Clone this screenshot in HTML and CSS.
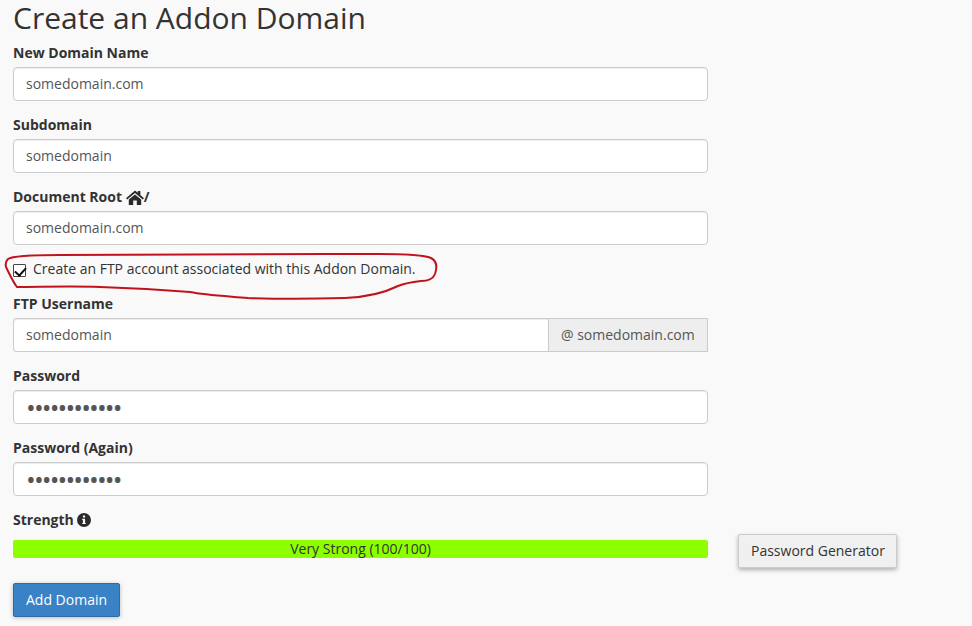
FILE: index.html
```html
<!DOCTYPE html>
<html lang="en">
<head>
<meta charset="utf-8">
<title>Create an Addon Domain</title>
<link rel="stylesheet" href="styles.css">
</head>
<body>
<main class="page">
  <h1 class="title">Create an Addon Domain</h1>
  <form class="form">
    <div class="group">
      <label class="label">New Domain Name</label>
      <input class="input" type="text" value="somedomain.com">
    </div>
    <div class="group">
      <label class="label">Subdomain</label>
      <input class="input" type="text" value="somedomain">
    </div>
    <div class="group">
      <label class="label">Document Root
        <svg class="home" viewBox="0 0 18 15" width="18" height="15"><path fill="#2b2b2b" d="M9 0.4 L11.8 2.8 V1 H14.4 V5 L18 8.2 L16.8 9.6 L9 3 L1.2 9.6 L0 8.2 Z M9 4.4 L15.2 9.6 V15 H10.8 V10.6 H7.2 V15 H2.8 V9.6 Z"/></svg>/</label>
      <input class="input" type="text" value="somedomain.com">
    </div>
    <label class="check-row">
      <input class="check" type="checkbox" checked>
      <span>Create an FTP account associated with this Addon Domain.</span>
    </label>
    <div class="group">
      <label class="label">FTP Username</label>
      <div class="input-group">
        <input class="input input-joined" type="text" value="somedomain">
        <span class="addon">@ somedomain.com</span>
      </div>
    </div>
    <div class="group">
      <label class="label">Password</label>
      <input class="input input-secret" type="password" value="abcdefghijkl">
    </div>
    <div class="group">
      <label class="label">Password (Again)</label>
      <input class="input input-secret" type="password" value="abcdefghijkl">
    </div>
    <div class="strength">
      <div class="strength-main">
        <div class="label">Strength
          <svg class="info" viewBox="0 0 14 14" width="14" height="14"><path fill="#2b2b2b" fill-rule="evenodd" d="M7 0 A7 7 0 1 1 7 14 A7 7 0 1 1 7 0 Z M5.9 2.5 V4.6 H8.1 V2.5 Z M5.2 5.8 V7 H5.9 V9.9 H5.2 V11.1 H8.8 V9.9 H8.1 V5.8 Z"/></svg>
        </div>
        <div class="meter">Very Strong (100/100)</div>
      </div>
      <button class="btn btn-default" type="button">Password Generator</button>
    </div>
    <button class="btn btn-primary" type="button">Add Domain</button>
  </form>
  <svg class="scribble" viewBox="0 0 972 626" width="972" height="626"><path fill="none" stroke="#c0141c" stroke-width="2" d="M8 259 C12 256 30 255 60 255 C130 254 260 254 380 254 C400 254 424 255 431 258 C437 261 437 268 435 274 C433 279 428 281 421 281 C412 282 405 283 398 286 C388 291 370 297 345 298 C310 299 275 299 248 298 C225 296 205 295 190 292 C165 290 130 288 100 287 C70 286 40 287 17 287 C13 282 9 273 6 267 C5 263 6 261 8 259 Z"/></svg>
</main>
</body>
</html>
```

FILE: styles.css
```css
* { box-sizing: border-box; }
html, body { margin: 0; padding: 0; }
body {
  background: #f9f9f9;
  color: #333;
  font-family: "Open Sans", "Liberation Sans", sans-serif;
  font-size: 14px;
  line-height: 20px;
  height: 626px;
  overflow: hidden;
}
.page { position: relative; padding: 1px 0 0 13px; }
.title {
  margin: 0 0 8px;
  font-size: 30px;
  font-weight: 400;
  line-height: 34px;
  height: 34px;
  color: #333;
}
.form { width: 884px; }
.group { width: 695px; margin-bottom: 14px; }
.label {
  display: block;
  margin-bottom: 4px;
  font-weight: 700;
  font-size: 14px;
  line-height: 20px;
}
.home { vertical-align: -3px; }
.info { vertical-align: -2px; }
.input {
  display: block;
  width: 100%;
  height: 34px;
  padding: 5px 12px 7px;
  border: 1px solid #ccc;
  border-radius: 4px;
  background: #fff;
  color: #555;
  font-family: inherit;
  font-size: 14px;
  line-height: 20px;
  box-shadow: inset 0 1px 1px rgba(0,0,0,.075);
}
.input-secret {
  padding: 0 12px 0;
  font-size: 26px;
  letter-spacing: -1.9px;
  line-height: 32px;
}
.input-group { display: flex; }
.input-joined { flex: 1; min-width: 0; border-radius: 4px 0 0 4px; border-right: 0; }
.addon {
  width: 160px;
  height: 34px;
  padding: 6px 12px;
  border: 1px solid #ccc;
  background: #eee;
  color: #555;
  white-space: nowrap;
}
.check-row {
  display: flex;
  align-items: center;
  height: 20px;
  margin-bottom: 15px;
}
.check {
  appearance: none;
  position: relative;
  flex: none;
  width: 13px;
  height: 13px;
  margin: 2px 7px 0 0;
  border: 1px solid #444;
  border-radius: 1px;
  background: #fff;
}
.check::after {
  content: "";
  position: absolute;
  left: 3px;
  top: 0;
  width: 5px;
  height: 9px;
  border: solid #111;
  border-width: 0 2px 2px 0;
  transform: rotate(42deg);
}
.strength { display: flex; align-items: flex-end; gap: 30px; margin-bottom: 25px; }
.strength-main { width: 695px; }
.strength-main .label { margin-bottom: 10px; }
.meter {
  height: 18px;
  background: #8cff00;
  border-radius: 2px;
  font-size: 14px;
  line-height: 18px;
  text-align: center;
  color: #333;
}
.btn {
  display: block;
  height: 34px;
  padding: 6px 12px;
  border: 1px solid #ccc;
  border-radius: 2px;
  font-family: inherit;
  font-size: 14px;
  line-height: 20px;
  white-space: nowrap;
}
.btn-default {
  flex: none;
  width: 159px;
  margin-bottom: -10px;
  background: #f0f0f0;
  color: #333;
  box-shadow: 0 2px 4px rgba(0,0,0,.3);
}
.btn-primary {
  width: 107px;
  background: #3a82c6;
  border-color: #2e6da4;
  color: #fff;
  box-shadow: 0 1px 4px rgba(0,0,0,.25);
}
.scribble { position: absolute; left: 0; top: 0; pointer-events: none; }
```
